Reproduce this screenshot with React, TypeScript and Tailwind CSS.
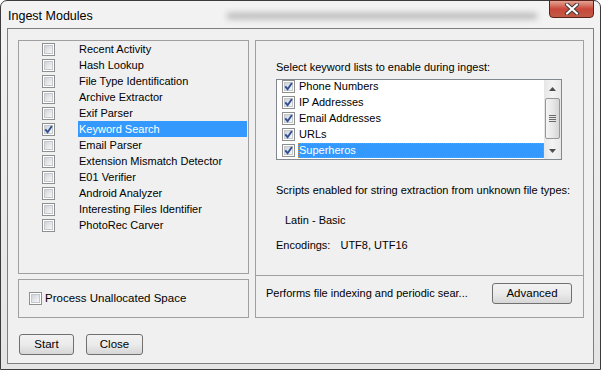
import { ReactNode } from 'react'

const modules = [
  'Recent Activity',
  'Hash Lookup',
  'File Type Identification',
  'Archive Extractor',
  'Exif Parser',
  'Keyword Search',
  'Email Parser',
  'Extension Mismatch Detector',
  'E01 Verifier',
  'Android Analyzer',
  'Interesting Files Identifier',
  'PhotoRec Carver',
]

const keywordLists = ['Phone Numbers', 'IP Addresses', 'Email Addresses', 'URLs', 'Superheros']

function CheckBox({ checked }: { checked?: boolean }) {
  return (
    <span className="flex h-[13px] w-[13px] shrink-0 border border-[#8e8f8f] bg-white p-[1px]">
      <span className="relative flex-1 border border-[#c4c7cb] bg-gradient-to-br from-[#d0d3d8] to-[#f8f8f8]">
        {checked && (
          <svg className="absolute -left-[2px] -top-[2px]" width="11" height="11" viewBox="0 0 11 11">
            <path d="M2.3 5.3 L4.6 8.2 L8.9 2" fill="none" stroke="#2f4f92" strokeWidth="1.9" />
          </svg>
        )}
      </span>
    </span>
  )
}

function Button({ children, className }: { children: ReactNode; className: string }) {
  return (
    <div
      className={
        'flex h-[21px] items-center justify-center rounded-[3px] border border-[#707070] bg-gradient-to-b from-[#f2f2f2] via-[#ebebeb] to-[#d6d6d6] text-[11.5px] text-black ' +
        className
      }
    >
      {children}
    </div>
  )
}

function Scrollbar() {
  return (
    <div className="flex w-[17px] flex-col bg-gradient-to-r from-[#e6e6e6] via-[#f3f3f3] to-[#e9e9e9]">
      <div className="flex h-[17px] items-center justify-center">
        <svg width="7" height="4" viewBox="0 0 7 4">
          <path d="M0 4 L3.5 0 L7 4 Z" fill="#4d4d4d" />
        </svg>
      </div>
      <div className="mx-[1px] mt-[1px] flex h-[41px] flex-col items-center justify-center gap-[1px] rounded-[2px] border border-[#979797] bg-gradient-to-r from-[#f4f4f4] via-[#e8e8e8] to-[#d5d5d5]">
        <span className="h-[1px] w-[7px] bg-[#6a6a6a]" />
        <span className="h-[1px] w-[7px] bg-[#6a6a6a]" />
        <span className="h-[1px] w-[7px] bg-[#6a6a6a]" />
        <span className="h-[1px] w-[7px] bg-[#6a6a6a]" />
      </div>
      <div className="flex flex-1 items-end justify-center pb-[6px]">
        <svg width="7" height="4" viewBox="0 0 7 4">
          <path d="M0 0 L3.5 4 L7 0 Z" fill="#4d4d4d" />
        </svg>
      </div>
    </div>
  )
}

export default function App() {
  return (
    <div className="h-[370px] w-[601px] font-['Liberation_Sans',Arial,sans-serif] text-[11px] text-black">
      <div className="flex h-full flex-col rounded-t-[7px] border border-[#3c3c3c] bg-gradient-to-b from-[#f3f3f3] to-[#e4e4e4] px-[6px] pb-[5px]">
        <div className="flex h-[27px] items-start">
          <span className="mt-[6px] pl-[1px] text-[12.5px] text-black">Ingest Modules</span>
          <span className="ml-auto mr-[12px] mt-[12px] h-[6px] w-[310px] bg-[#8c8c8c] opacity-60 blur-[3px]" />
          <div className="-mt-[1px] flex h-[18px] w-[45px] items-center justify-center rounded-b-[4px] border border-[#5b2018] bg-gradient-to-b from-[#e2a394] via-[#c9473a] to-[#c05a44]">
            <svg width="16" height="12" viewBox="0 0 16 12">
              <path d="M3 1.5 L13 10.5 M13 1.5 L3 10.5" stroke="#3a3a3a" strokeWidth="4" strokeLinecap="round" />
              <path d="M3 1.5 L13 10.5 M13 1.5 L3 10.5" stroke="#ffffff" strokeWidth="2.2" strokeLinecap="round" />
            </svg>
          </div>
        </div>

        <div className="flex flex-1 flex-col border border-[#7f7f7f] bg-[#f0f0f0]">
          <div className="flex gap-[6px] pl-[10px] pr-[9px] pt-[11px]">
            <div className="flex w-[231px] flex-col gap-[5px]">
              <div className="flex h-[234px] flex-col border border-[#a0a0a0]">
                {modules.map((name) => {
                  const selected = name === 'Keyword Search'
                  return (
                    <div key={name} className="flex h-[16px] items-center">
                      <div className="flex w-[59px] justify-center">
                        <CheckBox checked={selected} />
                      </div>
                      <div
                        className={
                          'mr-[1px] flex h-full flex-1 items-center pl-[1px] ' +
                          (selected ? 'bg-[#3399ff] text-white' : '')
                        }
                      >
                        {name}
                      </div>
                    </div>
                  )
                })}
              </div>
              <div className="flex h-[39px] items-center gap-[3px] border border-[#a0a0a0] pl-[10px] text-[11.5px]">
                <CheckBox />
                <span>Process Unallocated Space</span>
              </div>
            </div>

            <div className="flex h-[278px] w-[329px] flex-col border border-[#a0a0a0]">
              <div className="flex flex-1 flex-col pl-[20px] pt-[18px]">
                <div className="leading-[16px]">Select keyword lists to enable during ingest:</div>
                <div className="mt-[4px] flex h-[81px] w-[286px] border border-[#828790] bg-white">
                  <div className="flex-1 overflow-hidden">
                    <div className="-mt-[2px]">
                      {keywordLists.map((name) => {
                        const selected = name === 'Superheros'
                        return (
                          <div key={name} className="flex h-[16px] items-center gap-[3px] pl-[5px]">
                            <CheckBox checked />
                            <span
                              className={
                                'flex h-[15px] flex-1 items-center ' +
                                (selected ? 'border border-dotted border-[#e08a2c] bg-[#3399ff] text-white' : 'pl-[1px]')
                              }
                            >
                              {name}
                            </span>
                          </div>
                        )
                      })}
                    </div>
                  </div>
                  <Scrollbar />
                </div>
                <div className="mt-[22px] leading-[16px]">Scripts enabled for string extraction from unknown file types:</div>
                <div className="mt-[14px] pl-[9px] leading-[16px]">Latin - Basic</div>
                <div className="mt-[9px] flex leading-[16px]">
                  <span>Encodings:</span>
                  <span className="ml-[10px]">UTF8, UTF16</span>
                </div>
              </div>
              <div className="flex h-[42px] items-center border-t border-[#a0a0a0] pb-[6px] pl-[10px] pr-[11px]">
                <span>Performs file indexing and periodic sear...</span>
                <Button className="ml-auto w-[80px]">Advanced</Button>
              </div>
            </div>
          </div>

          <div className="mt-[16px] flex gap-[12px] pl-[11px]">
            <Button className="w-[55px]">Start</Button>
            <Button className="w-[57px]">Close</Button>
          </div>
        </div>
      </div>
    </div>
  )
}
